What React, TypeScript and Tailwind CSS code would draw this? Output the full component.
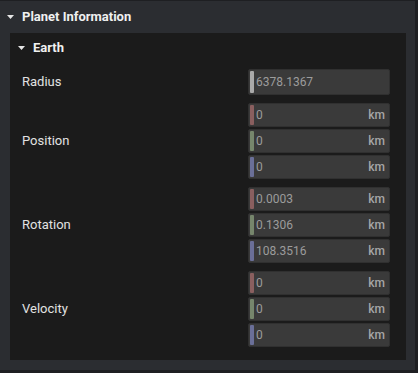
import React from "react";

type Field = { value: string; bar: string; unit?: string; tall?: boolean };

const groups: { label: string; fields: Field[] }[] = [
  { label: "Radius", fields: [{ value: "6378.1367", bar: "bg-[#a9a9a9]", tall: true }] },
  {
    label: "Position",
    fields: [
      { value: "0", bar: "bg-[#8a5f5f]", unit: "km" },
      { value: "0", bar: "bg-[#76866c]", unit: "km" },
      { value: "0", bar: "bg-[#6a6f98]", unit: "km" },
    ],
  },
  {
    label: "Rotation",
    fields: [
      { value: "0.0003", bar: "bg-[#8a5f5f]", unit: "km" },
      { value: "0.1306", bar: "bg-[#76866c]", unit: "km" },
      { value: "108.3516", bar: "bg-[#6a6f98]", unit: "km" },
    ],
  },
  {
    label: "Velocity",
    fields: [
      { value: "0", bar: "bg-[#8a5f5f]", unit: "km" },
      { value: "0", bar: "bg-[#76866c]", unit: "km" },
      { value: "0", bar: "bg-[#6a6f98]", unit: "km" },
    ],
  },
];

function Caret() {
  return (
    <svg width="7" height="4" viewBox="0 0 7 4" className="shrink-0">
      <path d="M0 0 H7 L3.5 4 Z" fill="#e6e6e6" />
    </svg>
  );
}

function NumberField({ field }: { field: Field }) {
  return (
    <div
      className={`flex items-stretch rounded-[2px] border border-[#303030] bg-[#3a3a3a] p-px ${
        field.tall ? "h-[26px]" : "h-[24px]"
      }`}
    >
      <div className={`w-[4px] rounded-[1px] ${field.bar}`} />
      <span className="flex flex-1 items-center pl-[2px] text-[12px] text-[#9c9c9c]">{field.value}</span>
      {field.unit && (
        <span className="flex items-center pr-[3px] text-[12px] font-medium text-[#a6a6a6]">{field.unit}</span>
      )}
    </div>
  );
}

export default function App() {
  return (
    <div className="h-[373px] w-[418px] bg-[#1e1f22] pt-px font-['Roboto',sans-serif]">
      <div className="flex h-[369px] w-[415px] flex-col bg-[#2b2d31]">
        <div className="flex h-[32px] items-center gap-[8px] pl-[7px]">
          <Caret />
          <span className="text-[13px] font-bold text-[#f0f0f0]">Planet Information</span>
        </div>

        <div className="ml-[10px] flex h-[327px] w-[396px] flex-col bg-[#1b1b1b]">
          <div className="flex h-[30px] items-center gap-[8px] pl-[8px]">
            <Caret />
            <span className="text-[13px] font-bold text-[#f0f0f0]">Earth</span>
          </div>

          <div className="mt-[6px] flex flex-col gap-[8px]">
            {groups.map((g) => (
              <div key={g.label} className="flex items-center">
                <span className="w-[238px] pl-[12px] text-[13px] text-[#e2e2e2]">{g.label}</span>
                <div className="flex w-[142px] flex-col gap-[2px]">
                  {g.fields.map((f, i) => (
                    <NumberField key={i} field={f} />
                  ))}
                </div>
              </div>
            ))}
          </div>
        </div>
      </div>
    </div>
  );
}
